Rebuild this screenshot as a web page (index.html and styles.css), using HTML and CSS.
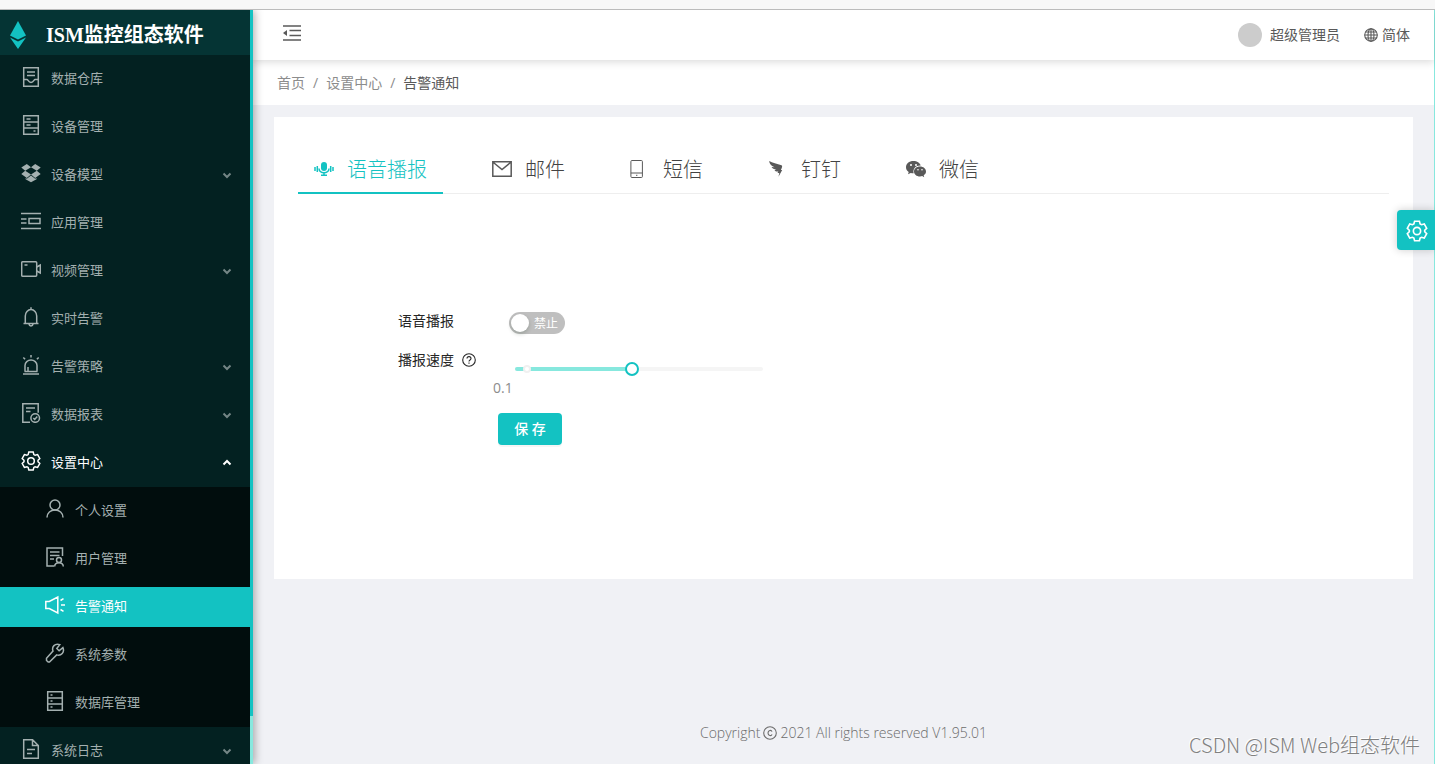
FILE: index.html
```html
<!DOCTYPE html>
<html lang="zh-CN">
<head>
<meta charset="utf-8">
<title>ISM监控组态软件</title>
<link rel="stylesheet" href="styles.css">
</head>
<body>
<svg class="sprite" aria-hidden="true">
  <symbol id="inbox" viewBox="0 0 20 20"><path d="M2.7.7h14.6v18.6H2.7zM6 5h8M6 8.500h8M2.700 12.500H6c1 0 1.300 3 4 3s3-3 4-3h3.300"/></symbol>
  <symbol id="cabinet" viewBox="0 0 20 20"><path d="M2.7.7h14.6v18.600H2.700zM2.700 7h14.600M2.700 13h14.600M5.500 4h4M5.500 10h4M12.500 16h2"/></symbol>
  <symbol id="dropbox" viewBox="0 0 20 20"><path class="solid" d="M5.800 1 10 4.200 4.200 7.800.3 4.600zM14.200 1 19.700 4.600l-3.900 3.200L10 4.200zM.3 11.100l3.900-3.300 5.800 3.600-4.200 3.500zM19.700 11.100l-3.900-3.300-5.800 3.600 4.200 3.500zM4.600 15l1.200.7 4.200-3.300 4.200 3.300 1.300-.7v1.200L10 19.300l-5.400-3.100z"/></symbol>
  <symbol id="applist" viewBox="0 0 20 20"><path d="M0 2.500h20M0 17.500h20M0 8h5.500M0 12h5.500M8 7.500h11v5H8z"/></symbol>
  <symbol id="video" viewBox="0 0 20 20"><rect x=".7" y="2.700" width="15" height="14.600" rx="1"/><path d="M3.500 6h3M15.700 8l3.600-2v8l-3.600-2"/></symbol>
  <symbol id="bell" viewBox="0 0 20 20"><path d="M10 .3v2M2.500 16.500h15M4.300 16.500V9a5.700 6.500 0 0 1 11.400 0v7.500M8 17.200c.3 2.400 3.700 2.400 4 0"/></symbol>
  <symbol id="alarm" viewBox="0 0 20 20"><path d="M2 19h16M3.500 16.500h13M4 16.500v-6a6 5.500 0 0 1 12 0v6M7 16v-4M10 0v2.500M2.300 2.500l1.800 1.800M17.700 2.500l-1.800 1.800"/></symbol>
  <symbol id="report" viewBox="0 0 20 20"><path d="M9 19.200H1.800V.8h15.400v9M5 5h9M5 8.500h4.500"/><circle cx="14.200" cy="15" r="4.300"/><path d="m12.300 15 1.400 1.400 2.600-3"/></symbol>
  <symbol id="gear" viewBox="0 0 20 20"><path d="M7.800 1.100h4.400l.65 2.500 1.250.7 2.500-.7 2.200 3.900-1.800 1.800v1.400l1.800 1.800-2.200 3.900-2.500-.7-1.250.7-.65 2.500H7.800l-.65-2.500-1.250-.7-2.500.7-2.200-3.900L3 10.700V9.300L1.200 7.500l2.200-3.900 2.500.7 1.250-.7z"/><circle cx="10" cy="10" r="3.300"/></symbol>
  <symbol id="user" viewBox="0 0 20 20"><circle cx="10" cy="6" r="5"/><path d="M2 18.500c0-4.500 3.600-7.500 8-7.500s8 3 8 7.500"/></symbol>
  <symbol id="members" viewBox="0 0 20 20"><path d="M9 19H2V1h15.500v8M5 5h9.500M5 8.500h9.500M5 12h4"/><circle cx="14" cy="13" r="2.500"/><path d="M9.700 19.500c0-5 8.600-5 8.600 0"/></symbol>
  <symbol id="horn" viewBox="0 0 20 20"><path d="M.8 6.500h3.500L12.800 2v16l-8.500-4.500H.8zM15.500 5.500l3-1.800M16 10h4M15.500 14.500l3 1.800"/></symbol>
  <symbol id="wrench" viewBox="0 0 20 20"><path d="m17.900 4.600-3.800 3.200-2.300-2.300 3-3.900c-5-1.800-8.300 2.400-6.800 6.500L1.500 15.300v2.200l1.700 1.600h1.300l7.200-7.200c4.500 1.200 8.200-2.600 6.200-7.300z"/></symbol>
  <symbol id="database" viewBox="0 0 20 20"><path d="M2.700.7h14.600v18.600H2.700zM2.700 7h14.600M2.700 13h14.600M5.500 4h2M5.500 10h2M5.500 16h2"/></symbol>
  <symbol id="file" viewBox="0 0 20 20"><path d="M2.700.7h8.800l5.800 5.800v12.800H2.700zM11.500.7v5.800h5.800M6 10.500h8M6 14.500h5"/></symbol>
  <symbol id="arrow" viewBox="0 0 10 10"><path d="m1.500 3.500 3.500 3.500 3.500-3.500"/></symbol>
  <symbol id="mic" viewBox="0 0 20 20"><rect class="solid" x="7" y="3" width="6" height="9" rx="3"/><path d="M5 9.500c0 5.500 10 5.500 10 0M10 14v2.300M7 16.300h6M1 8v4M3.300 7v6M16.700 7v6M19 8v4"/></symbol>
  <symbol id="mail" viewBox="0 0 20 20"><path d="M.8 2.700h18.400v14.600H.8zM.8 3l9.200 7.500L19.200 3"/></symbol>
  <symbol id="phone" viewBox="0 0 20 20"><rect x=".9" y="1.500" width="11.500" height="17" rx="1"/><path d="M.9 14h11.500M6 16.300h1.400"/></symbol>
  <symbol id="ding" viewBox="0 0 20 20"><path class="solid" d="M1.200 2c3 1.800 8 2.800 12.300 4.300 1 .5.900 1.500-.6 4.700h1.300L10.500 17.800l.8-3.800H9.500l.8-1.500c-2 .3-3-.2-3.800-1.500l2-.2C6 10.300 4.300 9.500 3.600 8l3 .2C4 7 1.500 5.500 1.200 2z"/></symbol>
  <symbol id="wechat" viewBox="0 0 20 20"><path class="solid" fill-rule="evenodd" d="M7.500 2C3 2 0 4.700 0 8.200c0 2 1 3.500 2.700 4.700L2 15.200l2.700-1.300c1 .3 2 .4 3 .4-1.300-4.500 2.300-8 7-7.700C14 3.800 11 2 7.500 2zM5 5a1 1 0 1 1 0 2 1 1 0 0 1 0-2zm5 0a1 1 0 1 1 0 2 1 1 0 0 1 0-2zM14 7.400c-3.500 0-6 2.300-6 5s2.500 5 6 5c.8 0 1.500-.1 2.200-.3l2 1.100-.5-1.900c1.400-1 2.300-2.300 2.300-3.900 0-2.700-2.600-5-6-5zM12 10a.8.8 0 1 1 0 1.600.8.8 0 0 1 0-1.600zm4 0a.8.8 0 1 1 0 1.600.8.8 0 0 1 0-1.600z"/></symbol>
  <symbol id="fold" viewBox="0 0 18 16"><path d="M0 1h18M6.500 5.500H18M6.500 10.500H18M0 15h18"/><path class="solid" d="M0 8l4-3v6z"/></symbol>
  <symbol id="globe" viewBox="0 0 14 14"><circle cx="7" cy="7" r="6.300"/><ellipse cx="7" cy="7" rx="3" ry="6.300"/><path d="M7 .7v12.600M.7 7h12.600M1.600 4h10.800M1.600 10h10.800"/></symbol>
  <symbol id="help" viewBox="0 0 14 14"><circle cx="7" cy="7" r="6.300"/><path d="M5 5.600c0-2.600 4-2.600 4 0C9 7 7 7 7 8.500M7 9.600v1.200"/></symbol>
  <symbol id="copy" viewBox="0 0 14 14"><circle cx="7" cy="7" r="6.300"/><path d="M9 5.700c-.6-2-4-1.700-4 1.300s3.400 3.300 4 1.300"/></symbol>
</svg>

<div class="topstrip"></div>
<div class="app">
  <aside class="sidebar">
    <div class="brand">
      <svg class="brand-mark" viewBox="0 0 16 28" aria-hidden="true"><path d="M8 0l8 14.500-8 4-8-4z"/><path d="M0 16.500l8 4 8-4L8 28z"/></svg>
      <h1 class="brand-name">ISM监控组态软件</h1>
    </div>
    <nav>
      <ul class="menu">
        <li><a href="#"><svg class="icon"><use href="#inbox"/></svg><span>数据仓库</span></a></li>
        <li><a href="#"><svg class="icon"><use href="#cabinet"/></svg><span>设备管理</span></a></li>
        <li><a href="#"><svg class="icon"><use href="#dropbox"/></svg><span>设备模型</span><svg class="arrow"><use href="#arrow"/></svg></a></li>
        <li><a href="#"><svg class="icon"><use href="#applist"/></svg><span>应用管理</span></a></li>
        <li><a href="#"><svg class="icon"><use href="#video"/></svg><span>视频管理</span><svg class="arrow"><use href="#arrow"/></svg></a></li>
        <li><a href="#"><svg class="icon"><use href="#bell"/></svg><span>实时告警</span></a></li>
        <li><a href="#"><svg class="icon"><use href="#alarm"/></svg><span>告警策略</span><svg class="arrow"><use href="#arrow"/></svg></a></li>
        <li><a href="#"><svg class="icon"><use href="#report"/></svg><span>数据报表</span><svg class="arrow"><use href="#arrow"/></svg></a></li>
        <li><a class="open" href="#"><svg class="icon"><use href="#gear"/></svg><span>设置中心</span><svg class="arrow"><use href="#arrow"/></svg></a>
          <ul class="submenu">
            <li><a href="#"><svg class="icon"><use href="#user"/></svg><span>个人设置</span></a></li>
            <li><a href="#"><svg class="icon"><use href="#members"/></svg><span>用户管理</span></a></li>
            <li><a class="active" href="#"><svg class="icon"><use href="#horn"/></svg><span>告警通知</span></a></li>
            <li><a href="#"><svg class="icon"><use href="#wrench"/></svg><span>系统参数</span></a></li>
            <li><a href="#"><svg class="icon"><use href="#database"/></svg><span>数据库管理</span></a></li>
          </ul>
        </li>
        <li><a href="#"><svg class="icon"><use href="#file"/></svg><span>系统日志</span><svg class="arrow"><use href="#arrow"/></svg></a></li>
      </ul>
    </nav>
  </aside>

  <div class="page">
    <header class="header">
      <button class="fold" type="button" aria-label="收起菜单"><svg><use href="#fold"/></svg></button>
      <a class="account" href="#"><span class="avatar"></span>超级管理员</a>
      <a class="lang" href="#"><svg class="small-icon"><use href="#globe"/></svg>简体</a>
    </header>
    <nav class="crumbs" aria-label="breadcrumb">
      <a href="#">首页</a><span class="sep">/</span><a href="#">设置中心</a><span class="sep">/</span><span class="current">告警通知</span>
    </nav>
    <main class="card">
      <div class="tabs" role="tablist">
        <button class="tab selected" type="button" role="tab" aria-selected="true"><svg class="icon"><use href="#mic"/></svg>语音播报</button>
        <button class="tab" type="button" role="tab"><svg class="icon"><use href="#mail"/></svg>邮件</button>
        <button class="tab thin" type="button" role="tab"><svg class="icon"><use href="#phone"/></svg>短信</button>
        <button class="tab" type="button" role="tab"><svg class="icon"><use href="#ding"/></svg>钉钉</button>
        <button class="tab" type="button" role="tab"><svg class="icon"><use href="#wechat"/></svg>微信</button>
      </div>
      <form class="form">
        <label class="label" for="voice">语音播报</label>
        <div class="switch">
          <input id="voice" type="checkbox" role="switch">
          <span class="switch-text">禁止</span>
        </div>
        <label class="label" for="speed">播报速度<svg class="small-icon"><use href="#help"/></svg></label>
        <div class="speed">
          <div class="slider">
            <div class="rail"><span class="fill"></span><span class="dot"></span></div>
            <input id="speed" type="range" min="0" max="1000" value="472">
          </div>
          <div class="mark">0.1</div>
        </div>
        <button class="save" type="button">保 存</button>
      </form>
    </main>
    <footer class="footer">Copyright <svg class="small-icon"><use href="#copy"/></svg> 2021 All rights reserved V1.95.01</footer>
  </div>
  <button class="settings" type="button" aria-label="设置"><svg><use href="#gear"/></svg></button>
  <div class="watermark">CSDN @ISM Web组态软件</div>
</div>
</body>
</html>
```

FILE: styles.css
```css
* { box-sizing: border-box; }
body {
  margin: 0;
  height: 100vh;
  display: flex;
  flex-direction: column;
  overflow: hidden;
  font: 14px/20px "Open Sans", "Noto Sans CJK SC", sans-serif;
  color: #595959;
  background: #f0f1f5;
}
a { color: inherit; text-decoration: none; }
ul { list-style: none; margin: 0; padding: 0; }
button { font: inherit; border: 0; background: none; padding: 0; cursor: pointer; }
svg { fill: none; stroke: currentColor; stroke-width: 1.5; }
.sprite { position: absolute; width: 0; height: 0; }
.solid { fill: currentColor; stroke: none; }
.icon { width: 20px; height: 20px; flex: none; }
.small-icon { width: 14px; height: 14px; flex: none; stroke-width: 1.1; }

.topstrip { position: relative; z-index: 3; flex: none; height: 10px; background: #f7f7f7; border-bottom: 1px solid #bbb; }
.app { position: relative; flex: 1; min-height: 0; display: flex; border-right: 1px solid #87e8de; }

.sidebar {
  position: relative;
  z-index: 2;
  flex: none;
  width: 253px;
  overflow: hidden;
  background: #032121;
  border-right: 3px solid;
  border-image: linear-gradient(#13c2c2 705px, #87e8de 705px) 1;
  box-shadow: 2px 0 8px rgba(0, 0, 0, 0.3);
}
.brand { display: flex; align-items: center; gap: 20px; height: 45px; padding: 4px 10px 0; background: #053434; }
.brand-mark { width: 16px; height: 28px; fill: #13c2c2; stroke: none; }
.brand-name {
  margin: 0;
  font: bold 20px/28px "Liberation Serif", "Noto Sans CJK SC", serif;
  color: #fff;
  white-space: nowrap;
}
.menu { font-size: 13px; color: #a4b0b0; }
.menu li { padding: 4px 0; }
.menu a { display: flex; align-items: center; gap: 10px; height: 40px; padding: 0 18px 0 21px; }
.menu .icon { margin-bottom: 4px; }
.menu span { padding-bottom: 2px; }
.arrow { width: 10px; height: 10px; margin-left: auto; stroke-width: 2; opacity: 0.7; }
.menu .open { color: #fff; }
.open .arrow { transform: rotate(180deg); opacity: 1; }
.submenu { margin: 4px 0 -4px; background: #010d0d; }
.submenu a { padding-left: 45px; }
.submenu .active { background: #13c2c2; color: #fff; }

.page { flex: 1; min-width: 0; display: flex; flex-direction: column; }
.header {
  position: relative;
  z-index: 1;
  flex: none;
  display: flex;
  align-items: center;
  gap: 24px;
  height: 50px;
  padding: 0 24px 0 30px;
  background: #fff;
  box-shadow: 0 2px 8px rgba(0, 0, 0, 0.15);
}
.fold { margin-right: auto; color: #595959; }
.fold svg { display: block; width: 18px; height: 16px; margin-bottom: 4px; }
.account, .lang { display: flex; align-items: center; }
.account { gap: 8px; }
.lang { gap: 4px; }
.avatar { width: 24px; height: 24px; border-radius: 50%; background: #ccc; }
.crumbs { flex: none; display: flex; align-items: center; height: 45px; padding: 0 24px; background: #fff; color: #8c8c8c; }
.sep { margin: 0 8px; }
.current { color: #595959; }

.card { margin: 12px 21px 0; padding: 24px; background: #fff; }
.tabs { display: flex; gap: 33px; height: 53px; box-shadow: inset 0 -1px #eee; }
.tab {
  display: flex;
  align-items: center;
  gap: 13px;
  padding: 6px 16px 0;
  border-bottom: 2px solid transparent;
  font-size: 20px;
  font-weight: 300;
  color: #434343;
}
.tab .icon { margin-bottom: 2px; color: #595959; }
.tab.selected, .tab.selected .icon { color: #13c2c2; }
.tab.selected { border-color: #13c2c2; }
.tab.thin .icon { stroke-width: 1; }

.form { display: grid; grid-template-columns: 95px 1fr; padding: 108px 100px 110px; color: #262626; }
.label { display: flex; align-items: center; gap: 8px; height: 38px; white-space: nowrap; }
.switch { display: grid; grid-template-rows: 22px; width: 56px; height: 22px; margin: 10px 0 7px 16px; }
.switch input, .switch-text { grid-area: 1 / 1; }
.switch input { appearance: none; margin: 0; border-radius: 11px; background: #bfbfbf; }
.switch input::before {
  content: "";
  display: block;
  width: 18px;
  height: 18px;
  margin: 2px;
  border-radius: 50%;
  background: #fff;
  box-shadow: 0 2px 4px rgba(0, 35, 11, 0.2);
}
.switch-text { padding-left: 25px; font-size: 12px; line-height: 24px; color: #fff; pointer-events: none; }
.speed { height: 72px; padding-top: 21px; }
.slider { display: grid; align-items: center; max-width: 262px; margin-left: 15px; }
.rail, .slider input { grid-area: 1 / 1; }
.rail { position: relative; height: 4px; margin: 0 7px; border-radius: 2px; background: #f5f5f5; }
.fill { display: block; width: 47%; height: 4px; border-radius: 2px; background: #87e8de; }
.dot {
  position: absolute;
  left: 5%;
  top: 50%;
  width: 8px;
  height: 8px;
  transform: translate(-50%, -50%);
  border: 2px solid #f0f0f0;
  border-radius: 50%;
  background: #fff;
}
.slider input { position: relative; appearance: none; width: 100%; height: 14px; margin: 0; background: transparent; }
.slider input::-webkit-slider-thumb {
  appearance: none;
  width: 14px;
  height: 14px;
  border: 2px solid #13c2c2;
  border-radius: 50%;
  background: #fff;
}
.mark { margin-top: 2px; color: #8c8c8c; }
.save {
  grid-column: 2;
  width: 64px;
  height: 32px;
  margin-left: 5px;
  border-radius: 4px;
  background: #13c2c2;
  color: #fff;
  font-weight: 500;
  box-shadow: 0 2px 0 rgba(0, 0, 0, 0.04);
}

.footer {
  display: flex;
  align-items: center;
  justify-content: center;
  gap: 3px;
  margin-top: auto;
  padding-bottom: 21px;
  font-weight: 300;
  color: #6b6b6b;
}
.settings {
  position: absolute;
  z-index: 3;
  right: -1px;
  top: 200px;
  width: 38px;
  height: 40px;
  border-radius: 4px 0 0 4px;
  background: #13c2c2;
  color: #fff;
  box-shadow: 0 0 8px rgba(0, 0, 0, 0.2);
}
.settings svg { display: block; width: 22px; height: 22px; margin: 2px 0 0 9px; }
.watermark {
  position: absolute;
  right: 14px;
  bottom: 4px;
  font: 300 20px/30px "Noto Sans CJK SC", sans-serif;
  color: #808080;
  text-shadow: -1px -1px #fff;
  white-space: nowrap;
}
```
